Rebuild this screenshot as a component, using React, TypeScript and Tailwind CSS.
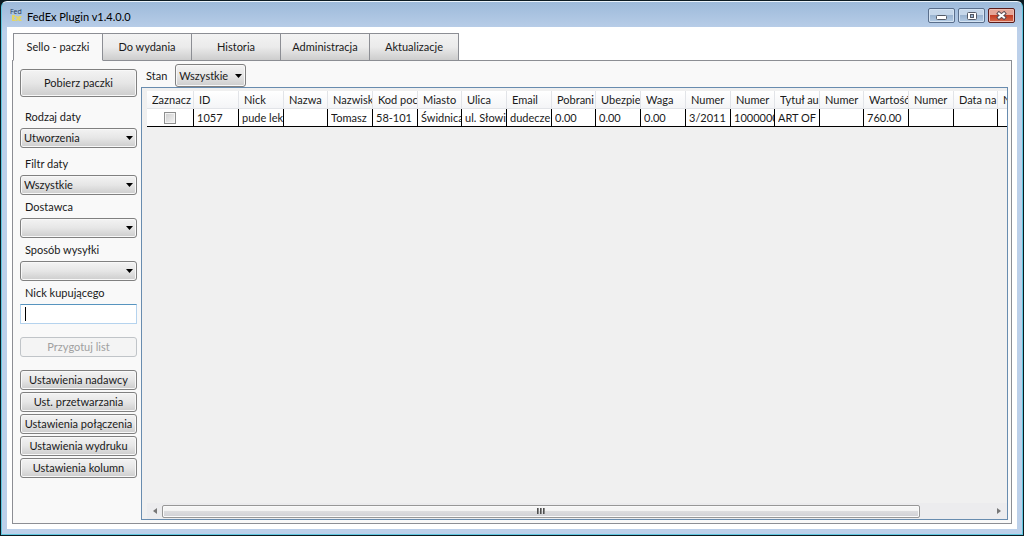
import React, { useState } from 'react';
import clsx from 'clsx';

const tabs = ['Sello - paczki', 'Do wydania', 'Historia', 'Administracja', 'Aktualizacje'];

const columns = [
  { title: 'Zaznacz', value: '', width: 'w-[47px]' },
  { title: 'ID', value: '1057', width: 'w-[45px]' },
  { title: 'Nick', value: 'pude lek', width: 'w-[45px]' },
  { title: 'Nazwa', value: '', width: 'w-[44px]' },
  { title: 'Nazwisk', value: 'Tomasz', width: 'w-[45px]' },
  { title: 'Kod poc', value: '58-101', width: 'w-[45px]' },
  { title: 'Miasto', value: 'Świdnica', width: 'w-[44px]' },
  { title: 'Ulica', value: 'ul. Słowi', width: 'w-[45px]' },
  { title: 'Email', value: 'dudecze', width: 'w-[45px]' },
  { title: 'Pobrani', value: '0.00', width: 'w-[44px]' },
  { title: 'Ubezpie', value: '0.00', width: 'w-[45px]' },
  { title: 'Waga', value: '0.00', width: 'w-[45px]' },
  { title: 'Numer', value: '3/2011', width: 'w-[45px]' },
  { title: 'Numer', value: '1000000', width: 'w-[44px]' },
  { title: 'Tytuł au', value: 'ART OF', width: 'w-[45px]' },
  { title: 'Numer', value: '', width: 'w-[44px]' },
  { title: 'Wartość', value: '760.00', width: 'w-[45px]' },
  { title: 'Numer', value: '', width: 'w-[45px]' },
  { title: 'Data na', value: '', width: 'w-[44px]' },
  { title: 'Numer', value: '', width: 'w-[45px]' },
];

const settings = [
  'Ustawienia nadawcy',
  'Ust. przetwarzania',
  'Ustawienia połączenia',
  'Ustawienia wydruku',
  'Ustawienia kolumn',
];

const face = 'border border-[#808080] rounded-[3px] bg-linear-to-b from-[#f3f3f3] via-[#e6e6e6] to-[#cdcdcd] shadow-[inset_0_0_0_1px_#f8f8f8]';

function Button({ children, className, disabled }: { children: React.ReactNode; className?: string; disabled?: boolean }) {
  return (
    <button
      disabled={disabled}
      className={clsx(
        'w-full flex items-center justify-center whitespace-nowrap',
        disabled ? 'border border-[#c0c4c8] rounded-[3px] bg-[#f4f4f4] text-[#a0a0a0]' : face,
        className
      )}
    >
      {children}
    </button>
  );
}

function Select({ id, value, className }: { id: string; value: string; className: string }) {
  return (
    <div className="relative">
      <select id={id} className={clsx('block appearance-none pl-[3px] pr-4 outline-none', face, className)}>
        <option>{value}</option>
      </select>
      <svg viewBox="0 0 7 4" className="absolute right-1 inset-y-0 my-auto w-[7px] h-1 pointer-events-none">
        <path d="M0 0h7L3.500 4z" fill="#000" />
      </svg>
    </div>
  );
}

function Field({ id, label, children }: { id: string; label: string; children: React.ReactNode }) {
  return (
    <div className="flex flex-col gap-[3px]">
      <label htmlFor={id} className="pl-[5px] h-4 leading-4">{label}</label>
      {children}
    </div>
  );
}

function WindowButton({ label, close, children }: { label: string; close?: boolean; children: React.ReactNode }) {
  return (
    <button
      aria-label={label}
      className={clsx(
        'w-[27px] h-[15px] flex items-center justify-center rounded-[2px] border',
        close
          ? 'border-[#5a1c1c] bg-linear-to-b from-[#e5a597] from-45% via-[#c33c24] via-50% to-[#d4694c] shadow-[inset_0_0_0_1px_#eebbb0]'
          : 'border-[#5a6f8c] bg-linear-to-b from-[#c5d7ea] from-45% via-[#9ab4d0] via-50% to-[#b4cce6] shadow-[inset_0_0_0_1px_#d5e4f3]'
      )}
    >
      {children}
    </button>
  );
}

function TitleBar() {
  return (
    <header className="h-[25px] shrink-0 flex items-center px-[2px]">
      <svg viewBox="0 0 14 14" className="w-[14px] h-[14px] shrink-0">
        <text x="1" y="6" fontSize="7" fill="#243a5c" fontFamily="Open Sans, sans-serif">Fed</text>
        <path d="M3 7h3v2H5v1h1v1H5v1h1v1H3zM6 8h2l1 1 1-1h3l-2 2.500L13 13h-3l-1-1-1 1H6l2-2.500z" fill="#e3d566" />
      </svg>
      <h1 className="pl-1 pt-1 text-black flex-1">FedEx Plugin v1.4.0.0</h1>
      <div className="flex gap-[3px] pt-[2px]">
        <WindowButton label="Minimalizuj">
          <svg viewBox="0 0 11 6" className="w-[11px] h-[6px] mt-1">
            <rect x="0.500" y="0.500" width="10" height="4" rx="1" fill="#fff" stroke="#535a66" />
          </svg>
        </WindowButton>
        <WindowButton label="Maksymalizuj">
          <svg viewBox="0 0 10 8" className="w-[10px] h-2">
            <rect x="0.500" y="0.500" width="9" height="7" rx="1" fill="#fff" stroke="#535a66" />
            <rect x="3.500" y="2.500" width="3" height="3" fill="#9ab4d0" stroke="#535a66" />
          </svg>
        </WindowButton>
        <WindowButton label="Zamknij" close>
          <svg viewBox="0 0 11 9" className="w-[11px] h-[9px]">
            <path d="M3 2.500l5 4M8 2.500l-5 4" stroke="#5b4a52" strokeWidth="4" strokeLinecap="square" />
            <path d="M3 2.500l5 4M8 2.500l-5 4" stroke="#fff" strokeWidth="2" strokeLinecap="square" />
          </svg>
        </WindowButton>
      </div>
    </header>
  );
}

function Sidebar() {
  return (
    <aside className="w-[117px] shrink-0 pt-2 flex flex-col">
      <Button className="h-7 mb-3">Pobierz paczki</Button>
      <Field id="rodzaj" label="Rodzaj daty">
        <Select id="rodzaj" value="Utworzenia" className="w-full h-5" />
      </Field>
      <div className="flex flex-col gap-1 pt-2">
        <Field id="filtr" label="Filtr daty">
          <Select id="filtr" value="Wszystkie" className="w-full h-5" />
        </Field>
        <Field id="dostawca" label="Dostawca">
          <Select id="dostawca" value="" className="w-full h-5" />
        </Field>
        <Field id="wysylka" label="Sposób wysyłki">
          <Select id="wysylka" value="" className="w-full h-5" />
        </Field>
        <Field id="nick" label="Nick kupującego">
          <div className="relative">
            <input
              id="nick"
              type="text"
              className="block w-full h-5 px-1 bg-white border border-[#b5d3ee] border-t-[#5794bf] outline-none"
            />
            <span className="absolute left-[5px] top-[3px] w-px h-[14px] bg-black" />
          </div>
        </Field>
      </div>
      <Button disabled className="h-5 my-[13px]">Przygotuj list</Button>
      <div className="flex flex-col gap-[2px]">
        {settings.map(name => (
          <Button key={name} className="h-5">{name}</Button>
        ))}
      </div>
    </aside>
  );
}

function ParcelTable() {
  return (
    <div className="flex-1 overflow-hidden pl-[5px] pt-[3px]">
      <table className="table-fixed w-0 border-separate border-spacing-0 bg-white">
        <thead>
          <tr className="h-[18px]">
            {columns.map((col, i) => (
              <th
                key={i}
                className={clsx('p-0 pl-[5px] font-normal text-left bg-linear-to-b from-white to-[#f4f5f7] border-r border-b border-[#e2e4e8]', col.width)}
              >
                <div className="overflow-hidden whitespace-nowrap leading-4">{col.title}</div>
              </th>
            ))}
          </tr>
        </thead>
        <tbody>
          <tr className="h-[18px]">
            {columns.map((col, i) => (
              <td key={i} className="p-0 pl-[3px] border-r border-b border-black">
                {i === 0 ? (
                  <input
                    type="checkbox"
                    aria-label="Zaznacz"
                    className="block ml-[14px] appearance-none w-3 h-3 border border-[#8e8f8f] bg-linear-to-br from-[#cdcdcd] to-[#f5f5f5] shadow-[inset_0_0_0_1px_#f4f4f4]"
                  />
                ) : (
                  <div className="overflow-hidden whitespace-nowrap leading-4">{col.value}</div>
                )}
              </td>
            ))}
          </tr>
        </tbody>
      </table>
    </div>
  );
}

function ScrollBar() {
  return (
    <div className="h-4 shrink-0 ml-[5px] flex items-center bg-[#ececee]">
      <button aria-label="W lewo" className="w-[15px] h-full flex items-center justify-center">
        <svg viewBox="0 0 4 6" className="w-1 h-[6px]"><path d="M4 0v6L0 3z" fill="#777" /></svg>
      </button>
      <div className="flex-1 h-full flex items-center">
        <div className="w-[91.5%] h-[13px] flex items-center justify-center gap-px rounded-[2px] border border-[#979797] bg-linear-to-b from-[#f5f5f5] from-40% via-[#dcdcde] via-50% to-[#d0d0d5] shadow-[inset_0_0_0_1px_#fafafa]">
          <span className="w-[2px] h-[6px] bg-linear-to-r from-[#333] to-[#aaa]" />
          <span className="w-[2px] h-[6px] bg-linear-to-r from-[#333] to-[#aaa]" />
          <span className="w-[2px] h-[6px] bg-linear-to-r from-[#333] to-[#aaa]" />
        </div>
      </div>
      <button aria-label="W prawo" className="w-[17px] h-full flex items-center justify-center">
        <svg viewBox="0 0 4 6" className="w-1 h-[6px]"><path d="M0 0v6l4-3z" fill="#777" /></svg>
      </button>
    </div>
  );
}

export default function App() {
  const [active, setActive] = useState(0);

  return (
    <div className="h-screen bg-[#0b1a22] p-px font-['Lato','Open_Sans',sans-serif] text-[11px] leading-4 text-[#1a1a1a]">
      <div className="h-full flex flex-col px-[5px] pb-[5px] rounded-t-[6px] border border-[#5fc6de] border-t-[#eaf3fb] bg-linear-to-b from-[#9dbada] to-[#bcd0ea] to-[30px]">
        <TitleBar />
        <div className="flex-1 min-h-0 flex flex-col bg-white pt-[6px] px-[5px] pb-[5px]">
          {/* Tabs */}
          <nav className="flex pl-px">
            {tabs.map((tab, i) => (
              <button
                key={tab}
                onClick={() => setActive(i)}
                className={clsx(
                  'w-[90px] border border-[#8c8e94] flex items-center justify-center whitespace-nowrap',
                  i > 0 && '-ml-px',
                  i === active
                    ? 'h-7 bg-[#f9f9f9] border-b-[#f9f9f9] -mb-px z-10'
                    : 'h-[27px] bg-linear-to-b from-[#f3f3f3] via-[#ebebeb] to-[#cdcdcd] border-b-0'
                )}
              >
                {tab}
              </button>
            ))}
          </nav>

          <main className="flex-1 min-h-0 flex gap-1 border border-[#8c8e94] bg-[#f9f9f9] pl-[7px] pr-[3px] pb-[3px]">
            <Sidebar />
            <section className="flex-1 min-w-0 flex flex-col">
              <div className="flex items-center gap-2 pl-[5px] pt-[3px]">
                <label htmlFor="stan">Stan</label>
                <Select id="stan" value="Wszystkie" className="w-[71px] h-[23px]" />
              </div>
              <div className="flex-1 min-h-0 flex flex-col border border-[#688caf] bg-[#f0f0f0]">
                <ParcelTable />
                <ScrollBar />
              </div>
            </section>
          </main>
        </div>
      </div>
    </div>
  );
}
